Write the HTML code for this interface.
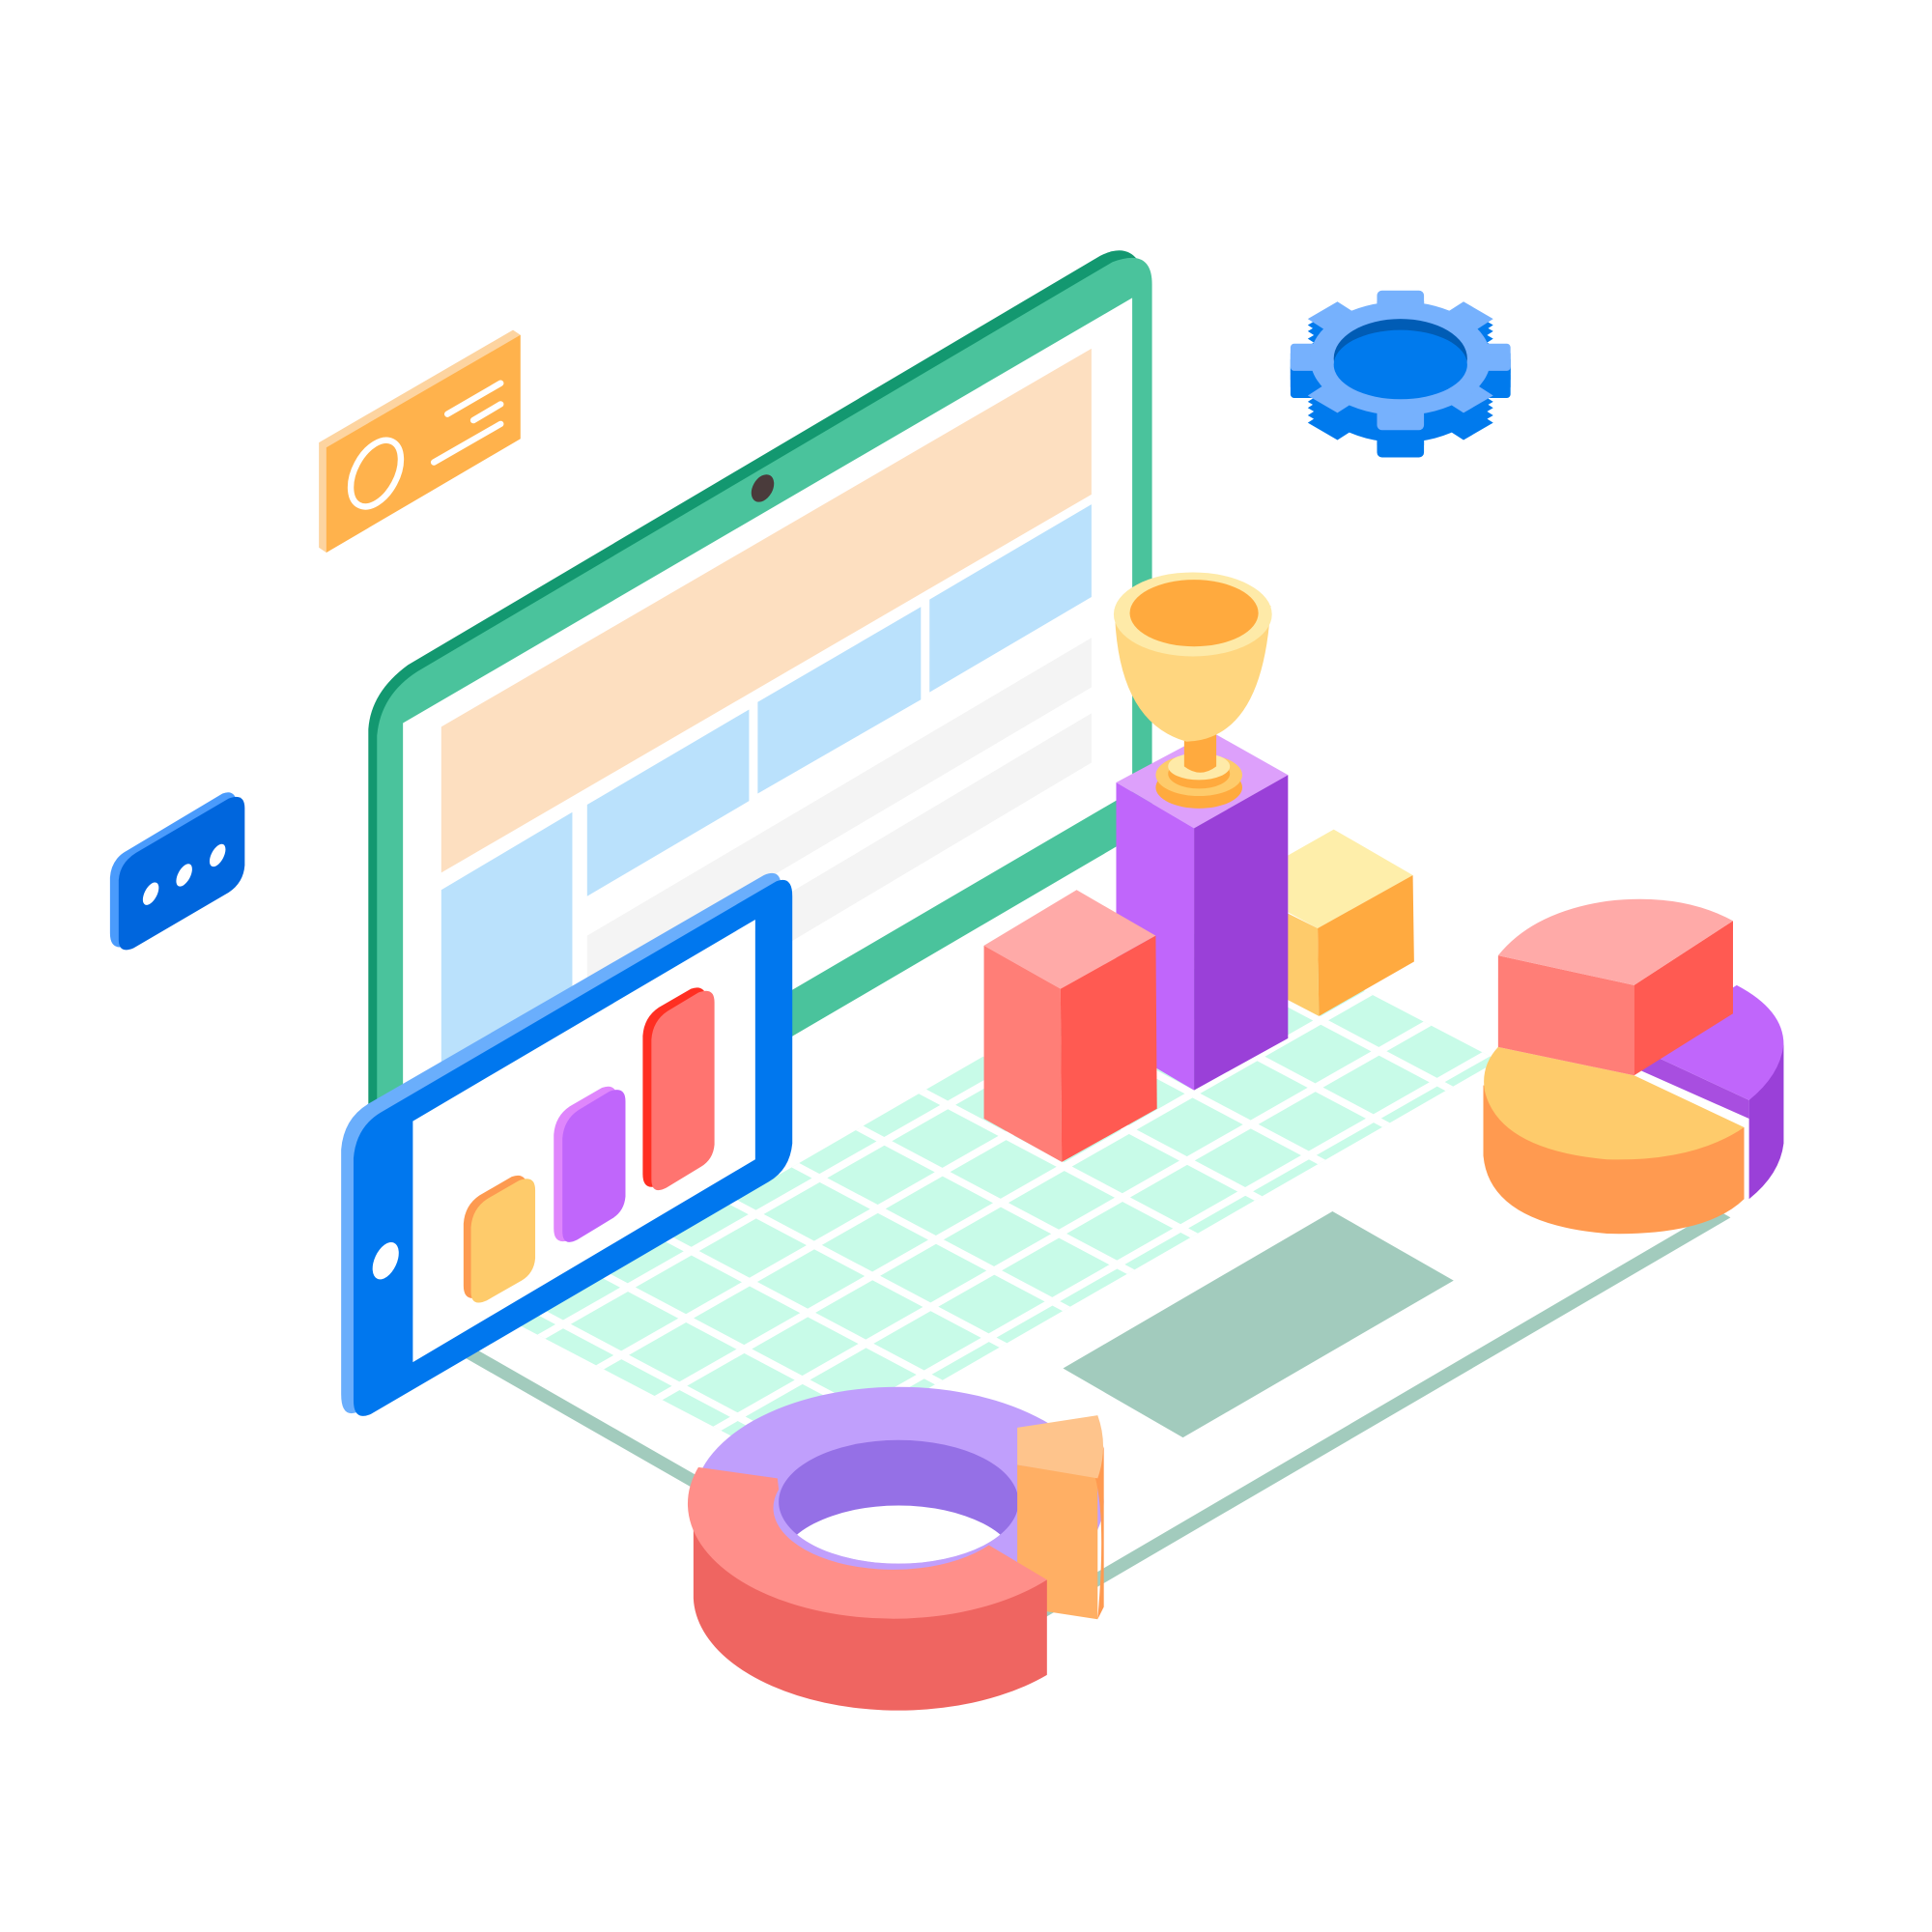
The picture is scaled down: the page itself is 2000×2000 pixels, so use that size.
<!DOCTYPE html>
<html><head><meta charset="utf-8"><style>html,body{margin:0;padding:0;background:#fff}svg{display:block}</style></head>
<body>
<svg width="2000" height="2000" viewBox="0 0 1563 1563" xmlns="http://www.w3.org/2000/svg">
<defs>
<clipPath id="kb"><polygon points="420,1072 640,1187 1212,858 990,742"/></clipPath>
<clipPath id="hole"><ellipse cx="727" cy="1215" rx="97" ry="50"/></clipPath>
<g id="gearShape">
<rect x="1114" y="235" width="38" height="30" rx="4"/>
<rect x="1114" y="318" width="38" height="30" rx="4"/>
<rect x="1044" y="278" width="40" height="22" rx="3"/>
<rect x="1182" y="278" width="40" height="22" rx="3"/>
<polygon points="1058,258 1082,244 1110,262 1086,276"/>
<polygon points="1208,258 1184,244 1156,262 1180,276"/>
<polygon points="1058,320 1082,334 1110,316 1086,302"/>
<polygon points="1208,320 1184,334 1156,316 1180,302"/>
<ellipse cx="1133" cy="290" rx="73" ry="46"/>
</g>
</defs>

<polygon points="330,1072 935,718 1400,985 795,1338" fill="#a2cbbd"/>
<polygon points="330,1060 935,706 1400,972 795,1326" fill="#fff"/>
<polygon points="420,1072 640,1187 1212,858 990,742" fill="#c8fbe8"/>
<g clip-path="url(#kb)" stroke="#fff" stroke-width="6">
<line x1="200" y1="1050" x2="1000" y2="1474"/>
<line x1="252" y1="1020" x2="1052" y2="1444"/>
<line x1="304" y1="991" x2="1104" y2="1415"/>
<line x1="356" y1="961" x2="1156" y2="1385"/>
<line x1="408" y1="932" x2="1208" y2="1356"/>
<line x1="460" y1="902" x2="1260" y2="1326"/>
<line x1="512" y1="873" x2="1312" y2="1297"/>
<line x1="564" y1="843" x2="1364" y2="1267"/>
<line x1="616" y1="814" x2="1416" y2="1238"/>
<line x1="668" y1="784" x2="1468" y2="1208"/>
<line x1="720" y1="755" x2="1520" y2="1179"/>
<line x1="772" y1="725" x2="1572" y2="1149"/>
<line x1="824" y1="696" x2="1624" y2="1120"/>
<line x1="876" y1="666" x2="1676" y2="1090"/>
<line x1="300" y1="1160" x2="1300" y2="590"/>
<line x1="347" y1="1185" x2="1347" y2="615"/>
<line x1="394" y1="1210" x2="1394" y2="640"/>
<line x1="441" y1="1235" x2="1441" y2="665"/>
<line x1="488" y1="1260" x2="1488" y2="690"/>
<line x1="535" y1="1285" x2="1535" y2="715"/>
<line x1="582" y1="1310" x2="1582" y2="740"/>
</g>
<polygon points="860,1107 1078,980 1176,1036 957,1163" fill="#a2cbbd"/>

<path d="M298,590 Q300,560 330,538 L890,207 Q910,197 920,210 L912,672 L298,1032 Z" fill="#139870"/>
<path d="M305,595 Q308,562 338,543 L900,212 Q932,200 932,230 L932,668 L305,1035 Z" fill="#4ac39c"/>
<polygon points="326,585 916,241 916,640 326,985" fill="#fff"/>
<polygon points="357,588 883,282 883,400 357,706" fill="#fddfc0"/>
<polygon points="357,720 463,657 463,900 357,960" fill="#bae1fc"/>
<polygon points="475,651 606,574 606,648 475,725" fill="#bae1fc"/>
<polygon points="613,568 745,491 745,566 613,642" fill="#bae1fc"/>
<polygon points="752,485 883,408 883,483 752,560" fill="#bae1fc"/>
<polygon points="475,757 883,516 883,556 475,797" fill="#f4f4f4"/>
<polygon points="475,820 883,577 883,617 475,860" fill="#f4f4f4"/>
<ellipse cx="617" cy="395" rx="8" ry="12" transform="rotate(30 617 395)" fill="#4a3b3b"/>

<path d="M276,930 Q278,905 298,893 L618,708 Q632,702 632,718 L632,925 Q630,945 612,955 L290,1142 Q276,1148 276,1128 Z" fill="#6aaefc"/>
<path d="M286,937 Q288,912 308,900 L628,713 Q641,708 641,725 L641,925 Q639,946 622,956 L300,1144 Q286,1150 286,1133 Z" fill="#0077ee"/>
<polygon points="334,907 611,744 611,938 334,1102" fill="#fff"/>
<ellipse cx="312" cy="1020" rx="9" ry="16" transform="rotate(25 312 1020)" fill="#fff"/>
<path d="M375,990 Q376,975 388,967 L414,952 Q425,948 427,960 L427,1030 L385,1050 Q375,1052 375,1040 Z" fill="#fd9a50"/>
<path d="M381,993 Q382,978 394,970 L420,955 Q433,950 433,963 L433,1018 Q432,1030 422,1036 L394,1052 Q381,1058 381,1045 Z" fill="#fecb6b"/>
<path d="M448,918 Q449,903 461,895 L487,880 Q498,876 500,888 L500,980 L458,1004 Q448,1006 448,994 Z" fill="#df86fc"/>
<path d="M455,921 Q456,906 468,898 L493,883 Q506,878 506,891 L506,968 Q505,980 495,986 L467,1003 Q455,1009 455,996 Z" fill="#c066fb"/>
<path d="M520,838 Q521,823 533,815 L559,800 Q570,796 572,808 L572,935 L530,960 Q520,962 520,950 Z" fill="#ff2f22"/>
<path d="M527,841 Q528,826 540,818 L565,803 Q578,798 578,811 L578,926 Q577,938 567,944 L539,961 Q527,967 527,954 Z" fill="#ff7470"/>

<polygon points="1042,692 1079,671 1143,708 1066,751 1042,738" fill="#feeeaa"/>
<polygon points="1066,751 1143,708 1144,778 1067,822" fill="#ffaa40"/>
<polygon points="1040,738 1066,751 1067,822 1040,808" fill="#fecb6b"/>
<polygon points="903,633 980,592 1042,627 966,670" fill="#dda0fb"/>
<polygon points="903,633 966,670 966,882 903,845" fill="#c066fb"/>
<polygon points="966,670 1042,627 1042,840 966,882" fill="#9a40d8"/>
<ellipse cx="970" cy="637" rx="35" ry="17" fill="#ffaa3e"/>
<ellipse cx="970" cy="627" rx="35" ry="17" fill="#fecb6b"/>
<ellipse cx="970" cy="626" rx="25" ry="12" fill="#ffaa3e"/>
<ellipse cx="970" cy="620" rx="25" ry="11" fill="#feeaa8"/>
<path d="M958,592 L984,592 L984,620 Q971,630 958,620 Z" fill="#ffaa3e"/>
<path d="M902,500 Q906,585 960,600 Q1022,598 1028,490 Z" fill="#ffd67f"/>
<ellipse cx="965" cy="497" rx="64" ry="34" fill="#feeaa8"/>
<ellipse cx="966" cy="496" rx="52" ry="27" fill="#ffaa3e"/>
<polygon points="796,765 871,720 935,757 858,800" fill="#ffaaa8"/>
<polygon points="796,765 858,800 859,940 796,905" fill="#ff7e77"/>
<polygon points="858,800 935,757 936,897 859,940" fill="#ff5a52"/>

<path d="M1200,878 L1200,935 Q1205,990 1300,998 Q1380,1000 1411,970 L1411,912 Z" fill="#ff9a50"/>
<path d="M1212,847 Q1198,862 1201,882 Q1212,930 1300,938 Q1370,940 1411,912 L1322,870 Z" fill="#fecb6b"/>
<path d="M1415,890 L1443,845 L1443,925 Q1440,950 1415,970 Z" fill="#9a40d8"/>
<polygon points="1325,848 1415,890 1415,905 1325,865" fill="#a84ee0"/>
<path d="M1325,848 L1405,797 Q1443,817 1443,845 Q1440,870 1415,890 Z" fill="#c066fb"/>
<polygon points="1212,773 1322,797 1322,870 1212,847" fill="#ff7e77"/>
<polygon points="1322,797 1402,745 1402,820 1322,870" fill="#ff5a52"/>
<path d="M1212,773 Q1240,738 1300,729 Q1360,722 1402,745 L1322,797 Z" fill="#ffaaa8"/>

<ellipse cx="727" cy="1215" rx="166" ry="93" fill="#c09ffc"/>
<ellipse cx="727" cy="1215" rx="97" ry="50" fill="#9570e6"/>
<ellipse cx="727" cy="1268" rx="97" ry="50" fill="#fff" clip-path="url(#hole)"/>
<path d="M823,1185 L888,1195 L888,1310 L823,1300 Z" fill="#ffaf64"/>
<path d="M886,1195 Q895,1230 888,1310 L893,1300 L893,1170 Z" fill="#ff9a50"/>
<path d="M823,1155 L888,1145 Q897,1170 888,1196 L823,1185 Z" fill="#fec48c"/>
<path d="M561,1215 A166,93 0 0 0 847,1278 L847,1355 A166,93 0 0 1 561,1293 Z" fill="#ef6561"/>
<path d="M565,1187 A166,93 0 0 0 847,1278 L800,1250 A97,50 0 0 1 630,1205 L629,1196 Z" fill="#ff8f8a"/>

<polygon points="258,358 415,267 421,271 421,355 264,447 258,443" fill="#fdd4a0"/>
<polygon points="264,362 421,271 421,355 264,447" fill="#ffb24c"/>
<ellipse cx="304" cy="383" rx="17" ry="29" transform="rotate(28 304 383)" fill="none" stroke="#fff" stroke-width="5"/>
<g stroke="#fff" stroke-width="5" stroke-linecap="round">
<line x1="362" y1="335" x2="405" y2="310"/>
<line x1="383" y1="340" x2="405" y2="327"/>
<line x1="351" y1="374" x2="405" y2="343"/>
</g>
<path d="M89,710 Q90,695 103,688 L180,642 Q190,638 192,650 L192,702 L100,766 Q89,768 89,755 Z" fill="#4a9bfc"/>
<path d="M96,712 Q97,698 110,690 L185,646 Q198,641 198,654 L198,700 Q197,714 185,722 L108,767 Q96,772 96,760 Z" fill="#0066dd"/>
<ellipse cx="122" cy="723" rx="5" ry="10" transform="rotate(28 122 723)" fill="#fff"/>
<ellipse cx="149" cy="708" rx="5" ry="10" transform="rotate(28 149 708)" fill="#fff"/>
<ellipse cx="176" cy="692" rx="5" ry="10" transform="rotate(28 176 692)" fill="#fff"/>

<g fill="#007aed">
<g transform="translate(0,22)"><use href="#gearShape"/></g>
<g transform="translate(0,16)"><use href="#gearShape"/></g>
<g transform="translate(0,10)"><use href="#gearShape"/></g>
<g transform="translate(0,5)"><use href="#gearShape"/></g>
</g>
<g fill="#76b1fd"><use href="#gearShape"/></g>
<ellipse cx="1133" cy="290" rx="54" ry="32" fill="#005cb5"/>
<ellipse cx="1133" cy="295" rx="54" ry="28" fill="#007aed"/>
</svg>
</body></html>
